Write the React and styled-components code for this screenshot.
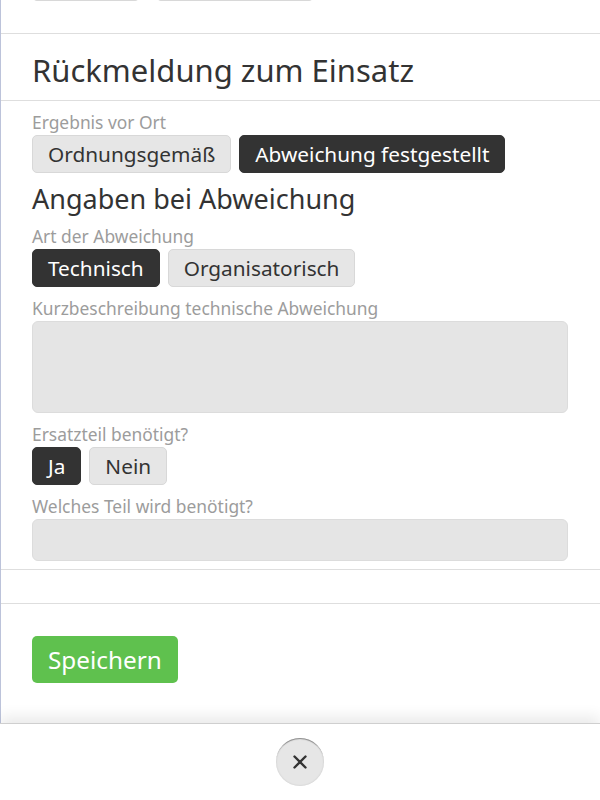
import React from 'react';
import styled, { createGlobalStyle } from 'styled-components';

const GlobalStyle = createGlobalStyle`
  html, body {
    margin: 0;
    padding: 0;
    height: 100%;
    background: #fff;
  }
  #root {
    height: 100%;
  }
  * {
    box-sizing: border-box;
  }
`

const Page = styled.div`
  display: flex;
  flex-direction: column;
  height: 800px;
  font-family: "Noto Sans", "Open Sans", sans-serif;
  color: #333;
`
const Panel = styled.div`
  flex: 1;
  overflow: hidden;
  border-left: 1px solid #bcc3da;
`
const Section = styled.section`
  border-bottom: ${props => props.last ? '0' : '1px solid #dedede'};
  padding: ${props => props.pad || '0 32px 0 31px'};
  height: ${props => props.h || 'auto'};
  overflow: hidden;
`
const Title = styled.h1`
  margin: 0;
  font-size: 31px;
  font-weight: 400;
  line-height: 36px;
`
const SubTitle = styled.h2`
  margin: 10px 0 0;
  font-size: 27px;
  font-weight: 400;
  line-height: 32px;
`
const Field = styled.div`
  margin-top: ${props => props.first ? '0' : '9px'};
`
const Label = styled.div`
  font-size: 17.4px;
  line-height: 24px;
  color: #9c9c9c;
  margin-bottom: 1px;
`
const ButtonRow = styled.div`
  display: flex;
  gap: 8px;
  margin-top: ${props => props.offset || '0'};
`
const Toggle = styled.button`
  font-family: inherit;
  font-size: 20.8px;
  line-height: 28px;
  height: 38px;
  padding: 0 15px;
  border-radius: 5px;
  border: 1px solid ${props => props.active ? '#333' : '#d8d8d8'};
  background: ${props => props.active ? '#333' : '#e6e6e6'};
  color: ${props => props.active ? '#fff' : '#333'};
  width: ${props => props.w || 'auto'};
  cursor: pointer;
`
const TextBox = styled.div`
  height: ${props => props.h};
  background: #e5e5e5;
  border: 1px solid #dcdcdc;
  border-radius: 6px;
`
const SaveButton = styled.button`
  font-family: inherit;
  font-size: 24.3px;
  line-height: 35px;
  height: 47px;
  padding: 0 16px;
  border: 0;
  border-radius: 5px;
  background: #5fc14e;
  color: #fff;
  cursor: pointer;
`
const BottomBar = styled.div`
  height: 77px;
  display: flex;
  align-items: center;
  justify-content: center;
  background: #fff;
  border-top: 1px solid #cfcfcf;
  box-shadow: 0 -6px 14px rgba(0, 0, 0, 0.09);
  position: relative;
`
const CloseButton = styled.button`
  width: 48px;
  height: 48px;
  border-radius: 50%;
  border: 0;
  background: #e6e6e6;
  box-shadow: inset 0 2px 1px -1px #8a8a8a, inset 0 0 2px rgba(0, 0, 0, 0.15);
  display: flex;
  align-items: center;
  justify-content: center;
  padding: 0;
  cursor: pointer;
`

const CloseIcon = () => (
  <svg width="14" height="14" viewBox="0 0 14 14">
    <path d="M1.5 1.5 L12.5 12.5 M12.5 1.5 L1.5 12.5" stroke="#333" strokeWidth="2.4" strokeLinecap="round" />
  </svg>
)

const App = () => {
  return (
    <>
      <GlobalStyle />
      <Page>
        <Panel>
          {/* previous block, scrolled mostly out of view */}
          <Section h="34px">
            <ButtonRow offset="-37px">
              <Toggle w="108px">&nbsp;</Toggle>
              <Toggle w="158px" style={{ marginLeft: '8px' }}>&nbsp;</Toggle>
            </ButtonRow>
          </Section>
          <Section pad="18px 32px 12px 31px">
            <Title>Rückmeldung zum Einsatz</Title>
          </Section>
          <Section pad="9px 32px 8px 31px">
            <Field first>
              <Label>Ergebnis vor Ort</Label>
              <ButtonRow>
                <Toggle>Ordnungsgemäß</Toggle>
                <Toggle active>Abweichung festgestellt</Toggle>
              </ButtonRow>
            </Field>
            <SubTitle>Angaben bei Abweichung</SubTitle>
            <Field>
              <Label>Art der Abweichung</Label>
              <ButtonRow>
                <Toggle active>Technisch</Toggle>
                <Toggle>Organisatorisch</Toggle>
              </ButtonRow>
            </Field>
            <Field>
              <Label>Kurzbeschreibung technische Abweichung</Label>
              <TextBox h="92px" />
            </Field>
            <Field>
              <Label>Ersatzteil benötigt?</Label>
              <ButtonRow>
                <Toggle active>Ja</Toggle>
                <Toggle>Nein</Toggle>
              </ButtonRow>
            </Field>
            <Field>
              <Label>Welches Teil wird benötigt?</Label>
              <TextBox h="42px" />
            </Field>
          </Section>
          <Section h="34px" />
          <Section pad="32px 32px 32px 31px" last>
            <SaveButton>Speichern</SaveButton>
          </Section>
        </Panel>
        <BottomBar>
          <CloseButton aria-label="Schließen">
            <CloseIcon />
          </CloseButton>
        </BottomBar>
      </Page>
    </>
  )
}

export default App;
